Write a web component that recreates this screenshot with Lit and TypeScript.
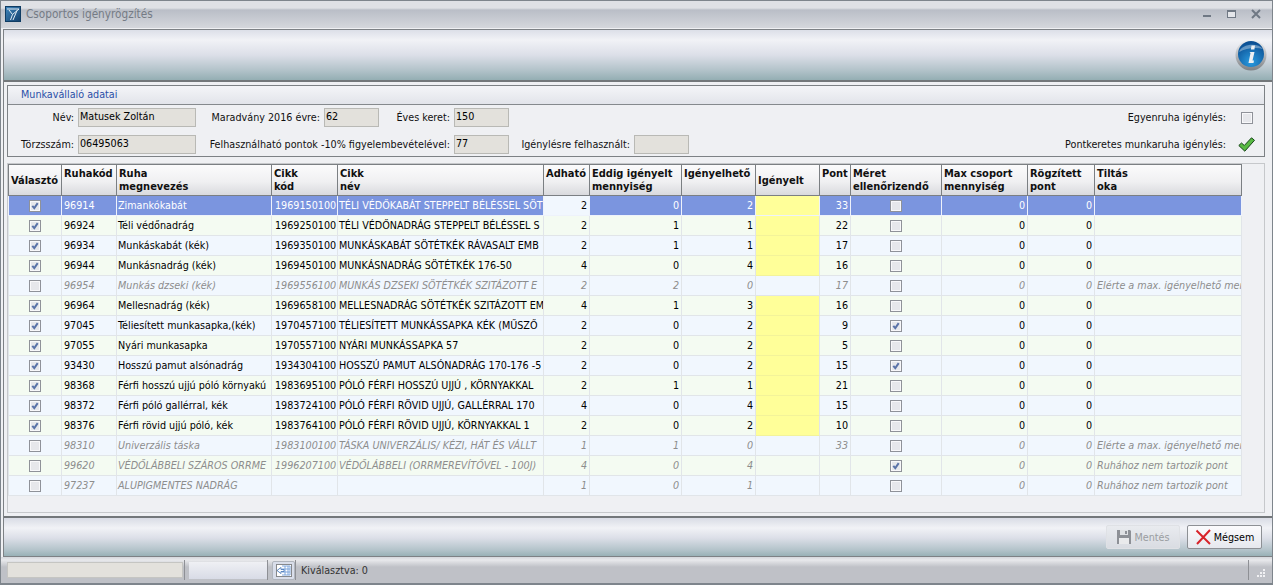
import { LitElement, html, css, svg } from 'lit';
import { customElement } from 'lit/decorators.js';
import { classMap } from 'lit/directives/class-map.js';

type Row = {
  pick: boolean;
  code: string;
  name: string;
  item: string;
  itemName: string;
  give: string;
  done: string;
  left: string;
  point: string;
  size?: boolean;
  off?: boolean;
  ask?: boolean;
  why?: string;
};

const MAXED = 'Elérte a max. igényelhető men';
const NOPOINT = 'Ruhához nem tartozik pont';

const rows: Row[] = [
  { pick: true, ask: true, code: '96914', name: 'Zimankókabát', item: '1969150100', itemName: 'TÉLI VÉDŐKABÁT STEPPELT BÉLÉSSEL SÖT', give: '2', done: '0', left: '2', point: '33' },
  { pick: true, ask: true, code: '96924', name: 'Téli védőnadrág', item: '1969250100', itemName: 'TÉLI VÉDŐNADRÁG STEPPELT BÉLÉSSEL S', give: '2', done: '1', left: '1', point: '22' },
  { pick: true, ask: true, code: '96934', name: 'Munkáskabát (kék)', item: '1969350100', itemName: 'MUNKÁSKABÁT SÖTÉTKÉK RÁVASALT EMB', give: '2', done: '1', left: '1', point: '17' },
  { pick: true, ask: true, code: '96944', name: 'Munkásnadrág (kék)', item: '1969450100', itemName: 'MUNKÁSNADRÁG SÖTÉTKÉK 176-50', give: '4', done: '0', left: '4', point: '16' },
  { pick: false, off: true, code: '96954', name: 'Munkás dzseki (kék)', item: '1969556100', itemName: 'MUNKÁS DZSEKI SÖTÉTKÉK SZITÁZOTT E', give: '2', done: '2', left: '0', point: '17', why: MAXED },
  { pick: true, ask: true, code: '96964', name: 'Mellesnadrág (kék)', item: '1969658100', itemName: 'MELLESNADRÁG SÖTÉTKÉK SZITÁZOTT EM', give: '4', done: '1', left: '3', point: '16' },
  { pick: true, ask: true, size: true, code: '97045', name: 'Téliesített munkasapka,(kék)', item: '1970457100', itemName: 'TÉLIESÍTETT MUNKÁSSAPKA KÉK (MŰSZŐ', give: '2', done: '0', left: '2', point: '9' },
  { pick: true, ask: true, code: '97055', name: 'Nyári munkasapka', item: '1970557100', itemName: 'NYÁRI MUNKÁSSAPKA 57', give: '2', done: '0', left: '2', point: '5' },
  { pick: true, ask: true, size: true, code: '93430', name: 'Hosszú pamut alsónadrág', item: '1934304100', itemName: 'HOSSZÚ PAMUT ALSÓNADRÁG 170-176 -5', give: '2', done: '0', left: '2', point: '15' },
  { pick: true, ask: true, code: '98368', name: 'Férfi hosszú ujjú póló környakú', item: '1983695100', itemName: 'PÓLÓ FÉRFI HOSSZÚ UJJÚ , KÖRNYAKKAL', give: '2', done: '1', left: '1', point: '21' },
  { pick: true, ask: true, code: '98372', name: 'Férfi póló gallérral, kék', item: '1983724100', itemName: 'PÓLÓ FÉRFI RÖVID UJJÚ, GALLÉRRAL 170', give: '4', done: '0', left: '4', point: '15' },
  { pick: true, ask: true, code: '98376', name: 'Férfi rövid ujjú póló, kék', item: '1983764100', itemName: 'PÓLÓ FÉRFI RÖVID UJJÚ, KÖRNYAKKAL 1', give: '2', done: '0', left: '2', point: '10' },
  { pick: false, off: true, code: '98310', name: 'Univerzális táska', item: '1983100100', itemName: 'TÁSKA UNIVERZÁLIS/ KÉZI, HÁT ÉS VÁLLT', give: '1', done: '1', left: '0', point: '33', why: MAXED },
  { pick: false, off: true, size: true, code: '99620', name: 'VÉDŐLÁBBELI SZÁROS ORRME', item: '1996207100', itemName: 'VÉDŐLÁBBELI (ORRMEREVÍTŐVEL - 100J)', give: '4', done: '0', left: '4', point: '', why: NOPOINT },
  { pick: false, off: true, code: '97237', name: 'ALUPIGMENTES NADRÁG', item: '', itemName: '', give: '1', done: '0', left: '1', point: '', why: NOPOINT },
];

const colWidths = [54, 55, 155, 66, 206, 46, 92, 74, 64, 31, 91, 86, 67, 147];

@customElement('app-root')
export class AppRoot extends LitElement {
  static styles = css`
    :host {
      display: block;
      width: 1273px;
      height: 585px;
      overflow: hidden;
      font-family: 'DejaVu Sans Condensed', 'DejaVu Sans', sans-serif;
      font-size: 10.7px;
      color: #111;
    }
    .win {
      height: 585px;
      box-sizing: border-box;
      display: flex;
      flex-direction: column;
      background: #eff0f3;
      border: 1px solid #7e858c;
      border-bottom: 2px solid #7e858c;
    }
    .title {
      flex: none;
      height: 27px;
      box-sizing: border-box;
      display: flex;
      align-items: center;
      padding: 0 4px 1px;
      gap: 5px;
      background: linear-gradient(#dfe1e5 0, #dfe1e5 7px, #babec7 9px, #c9ccd3 19px, #d5d7dc 27px);
      color: #757b85;
      font-size: 11.7px;
    }
    .title svg { display: block; }
    .wbtns { display: flex; gap: 11px; align-items: center; margin-right: 4px; }
    .body {
      flex: 1;
      min-height: 0;
      display: flex;
      flex-direction: column;
      margin: 1px 0 0 2px;
      border-left: 1px solid #7d8185;
    }
    .tool {
      flex: none;
      height: 53px;
      box-sizing: border-box;
      padding: 9px 5px 0 0;
      display: flex;
      justify-content: flex-end;
      border-top: 1px solid #7d8185;
      border-bottom: 2px solid #73777a;
      background: linear-gradient(#dcdfe8 0, #f1f2f6 10px, #dcdfe8 25px, #b3c3ca 40px, #94aeb3 50px);
    }
    .content {
      flex: 1;
      min-height: 0;
      padding: 3px 7px 3px 3px;
      display: flex;
      flex-direction: column;
      gap: 6px;
      background: #eff0f3;
    }
    .group {
      flex: none;
      height: 72px;
      box-sizing: border-box;
      border: 1px solid #7d8185;
    }
    .group-head {
      height: 18px;
      padding-left: 13px;
      line-height: 18px;
      color: #2a4fa8;
      border-bottom: 1px solid #85898d;
      background: linear-gradient(#f4f5f8, #e2e4ea);
    }
    .fields {
      padding: 3px 0 0 0;
      display: flex;
      flex-direction: column;
      gap: 8px;
    }
    .line {
      display: flex;
      align-items: center;
      height: 19px;
    }
    .lab {
      display: flex;
      justify-content: flex-end;
      padding-right: 4px;
      white-space: nowrap;
      flex: none;
      box-sizing: border-box;
    }
    .inp {
      flex: none;
      height: 19px;
      box-sizing: border-box;
      border: 1px solid #b9b9b5;
      background: #e3e1dc;
      padding: 1px;
      line-height: 14px;
      color: #000;
    }
    .ml14 { margin-left: 14px; }
    .l-first { width: 70px; }
    .l-rest { width: 114px; }
    .l-keret { width: 61px; }
    .l-long { width: 244px; }
    .l-used { width: 111px; }
    .i118 { width: 118px; }
    .i55 { width: 55px; }
    .grow { flex: 1; }
    .flag { display: flex; align-items: center; justify-content: flex-end; gap: 12px; }
    .flag svg { display: block; }
    .flag-icon { width: 23px; display: flex; justify-content: flex-start; margin-left: 3px; }
    .flag-icon.wide { margin-left: 0; width: 26px; }
    .table-wrap {
      flex: 1;
      min-height: 0;
      border: 1px solid #c6c8cb;
      overflow: hidden;
    }
    table {
      table-layout: fixed;
      border-collapse: separate;
      border-spacing: 0;
      width: 1234px;
    }
    th {
      height: 32px;
      box-sizing: border-box;
      padding: 2px 1px 0 2px;
      text-align: left;
      font-size: 11px;
      font-weight: 700;
      line-height: 13px;
      vertical-align: top;
      color: #101010;
      background: linear-gradient(#fbfbfc, #f0f0f2 55%, #d9dade);
      border: solid #7b7f83;
      border-width: 1px 1px 1px 0;
      overflow: hidden;
      white-space: nowrap;
    }
    th:first-child { border-left: 1px solid #7b7f83; }
    th.mid { vertical-align: middle; padding-top: 0; }
    td {
      height: 20px;
      box-sizing: border-box;
      padding: 0 2px;
      overflow: hidden;
      white-space: nowrap;
      border-right: 1px solid #e1e5e9;
      border-bottom: 1px solid #e1e5e9;
      color: #000;
    }
    td:first-child { border-left: 1px solid #e1e5e9; }
    td.tight { padding-left: 1px; }
    td.item { padding-left: 3px; padding-right: 0; }
    tr.even td { background: #f4fbf2; }
    tr.odd td { background: #f1f7fe; }
    tr.sel td { background: #7b95df; color: #fff; border-color: #eef2fb; }
    tr.sel td.give { background: #f1f7fe; color: #000; }
    tr.off td { color: #8d8d8d; font-style: italic; }
    td.num { text-align: right; }
    td.chk { padding: 0; }
    td.chk svg { display: block; margin: 0 auto; }
    td.want { background: #ffff99 !important; border-bottom-color: #f3f39a; }
    .foot {
      flex: none;
      height: 41px;
      box-sizing: border-box;
      border-top: 2px solid #73777a;
      border-bottom: 1px solid #7d8185;
      background: linear-gradient(#d9dce5 0, #f1f2f6 10px, #dcdfe8 20px, #b3c3ca 32px, #94aeb3 39px);
      display: flex;
      justify-content: flex-end;
      align-items: center;
      gap: 7px;
      padding: 0 10px 0 0;
    }
    .btn {
      width: 75px;
      height: 24px;
      box-sizing: border-box;
      display: flex;
      align-items: center;
      justify-content: center;
      gap: 2px;
      border: 1px solid #8d9095;
      border-radius: 2px;
      background: linear-gradient(#fbfbfd, #e6e8ee);
      color: #000;
    }
    .btn.dis {
      width: 74px;
      border-color: #dfe1e5;
      color: #9a9da1;
      background: linear-gradient(#e9ebef, #d9dce2);
    }
    .status {
      flex: none;
      height: 26px;
      box-sizing: border-box;
      margin-left: -3px;
      display: flex;
      align-items: center;
      background: linear-gradient(#d5d7dc 0, #e8e9ec 3px, #bfc1c7 10px, #bfc1c7 26px);
      padding-left: 6px;
      color: #333;
    }
    .s1 { width: 176px; height: 16px; box-sizing: border-box; background: #e3e1dc; border: 1px solid #c5c5c2; }
    .sep { width: 1px; height: 20px; background: #8e9095; flex: none; }
    .sep.first { margin-left: 1px; }
    .s2 { width: 78px; height: 17px; background: linear-gradient(#eff0f4, #d8dbe6); margin-left: 4px; }
    .s3 { width: 23px; height: 19px; box-sizing: border-box; display: flex; align-items: center; justify-content: center; margin-left: 4px; border: 1px solid #b0b5bd; border-radius: 2px; background: #d9deea; }
    .txt { margin-left: 5px; flex: 1; }
    .grip { width: 22px; height: 20px; border-left: 1px solid #8e9095; display: flex; align-items: flex-end; justify-content: flex-end; padding: 0 4px 2px 0; box-sizing: border-box; margin-right: 2px; }
  `;

  private box(checked: boolean) {
    return html`<svg width="12" height="12" viewBox="0 0 12 12">
      <rect x=".5" y=".5" width="11" height="11" fill="#e6e7eb" stroke="#8f9299"/>
      <rect x="1.5" y="1.5" width="9" height="9" fill="none" stroke="#f8f8fa"/>
      ${checked ? svg`<path d="M3.300 5.800l2 2.300 3.400-5" fill="none" stroke="#5a73a8" stroke-width="2"/>` : ''}
    </svg>`;
  }

  private row(r: Row, i: number) {
    const cls = { sel: i === 0, even: i % 2 === 1, odd: i % 2 === 0, off: !!r.off };
    return html`<tr class=${classMap(cls)}>
      <td class="chk">${this.box(r.pick)}</td>
      <td>${r.code}</td>
      <td class="tight">${r.name}</td>
      <td class="item">${r.item}</td>
      <td class="tight">${r.itemName}</td>
      <td class="num give">${r.give}</td>
      <td class="num">${r.done}</td>
      <td class="num">${r.left}</td>
      <td class=${r.ask ? 'want' : ''}></td>
      <td class="num">${r.point}</td>
      <td class="chk">${this.box(!!r.size)}</td>
      <td class="num">0</td>
      <td class="num">0</td>
      <td>${r.why ?? ''}</td>
    </tr>`;
  }

  render() {
    return html`<div class="win">
      <div class="title">
        <svg width="16" height="16" viewBox="0 0 16 16">
          <defs>
            <linearGradient id="tg" x1="0" y1="0" x2="1" y2="1"><stop offset="0" stop-color="#3f86bd"/><stop offset="1" stop-color="#123f6b"/></linearGradient>
          </defs>
          <rect x=".5" y=".5" width="15" height="15" fill="url(#tg)" stroke="#0f3c63"/>
          <path d="M2 3h12L7.500 8.500 5.500 14M4 4l3.500 4.500M12 4.500L8 14" fill="none" stroke="#e4edf4"/>
        </svg>
        <span>Csoportos igényrögzítés</span>
        <span class="grow"></span>
        <div class="wbtns">
          <svg width="14" height="10" viewBox="0 0 14 10"><rect x="3" y="6" width="8" height="2" fill="#6f7884"/></svg>
          <svg width="14" height="10" viewBox="0 0 14 10"><rect x="2.500" y="1.500" width="8" height="7" fill="#e4e6ea" stroke="#6f7884"/><rect x="2" y="1" width="9" height="2" fill="#6f7884"/></svg>
          <svg width="14" height="10" viewBox="0 0 14 10"><path d="M2 1l8 8M10 1L2 9" stroke="#6f7884" stroke-width="2"/></svg>
        </div>
      </div>
      <div class="body">
        <div class="tool">
          <svg width="32" height="32" viewBox="0 0 32 32">
            <defs>
              <radialGradient id="ig" cx=".5" cy=".8" r=".75"><stop offset="0" stop-color="#2a9be0"/><stop offset="1" stop-color="#0b4f93"/></radialGradient>
              <linearGradient id="ir" x1="0" y1="0" x2="0" y2="1"><stop offset="0" stop-color="#f2f3f5"/><stop offset="1" stop-color="#7d8084"/></linearGradient>
            </defs>
            <circle cx="16" cy="16" r="15.500" fill="url(#ir)"/>
            <circle cx="16" cy="15" r="13" fill="url(#ig)"/>
            <path d="M4 13c2-8 19-10 24-3-7-2-17-1-24 3z" fill="#fff" opacity=".35"/>
            <path d="M15.500 13h4l-2 8.500h1.500l-.5 2.500h-5l2-10h-1zM16.500 6.500h3.500l-.6 4h-3.500z" fill="#eef0f2"/>
          </svg>
        </div>
        <div class="content">
          <div class="group">
            <div class="group-head">Munkavállaló adatai</div>
            <div class="fields">
              <div class="line">
                <span class="lab l-first">Név:</span><span class="inp i118">Matusek Zoltán</span>
                <span class="lab l-rest ml14">Maradvány 2016 évre:</span><span class="inp i55">62</span>
                <span class="lab l-keret ml14">Éves keret:</span><span class="inp i55">150</span>
                <span class="grow"></span>
                <div class="flag">
                  <span>Egyenruha igénylés:</span>
                  <span class="flag-icon">${this.box(false)}</span>
                </div>
              </div>
              <div class="line">
                <span class="lab l-first">Törzsszám:</span><span class="inp i118">06495063</span>
                <span class="lab l-long ml14">Felhasználható pontok -10% figyelembevételével:</span><span class="inp i55">77</span>
                <span class="lab l-used ml14">Igénylésre felhasznált:</span><span class="inp i55"></span>
                <span class="grow"></span>
                <div class="flag">
                  <span>Pontkeretes munkaruha igénylés:</span>
                  <span class="flag-icon wide">
                    <svg width="17" height="15" viewBox="0 0 17 15"><path d="M.8 8.500L3.500 6l2.800 2.500L13.500.8l3 2.500L6.800 14.200z" fill="#58b943" stroke="#17451a"/></svg>
                  </span>
                </div>
              </div>
            </div>
          </div>
          <div class="table-wrap">
            <table>
              <colgroup>${colWidths.map((w) => html`<col style="width:${w}px" />`)}</colgroup>
              <thead>
                <tr>
                  <th class="mid">Választó</th>
                  <th>Ruhakód</th>
                  <th>Ruha<br />megnevezés</th>
                  <th>Cikk<br />kód</th>
                  <th>Cikk<br />név</th>
                  <th>Adható</th>
                  <th>Eddig igényelt<br />mennyiség</th>
                  <th>Igényelhető</th>
                  <th class="mid">Igényelt</th>
                  <th>Pont</th>
                  <th>Méret<br />ellenőrizendő</th>
                  <th>Max csoport<br />mennyiség</th>
                  <th>Rögzített<br />pont</th>
                  <th>Tiltás<br />oka</th>
                </tr>
              </thead>
              <tbody>${rows.map((r, i) => this.row(r, i))}</tbody>
            </table>
          </div>
        </div>
        <div class="foot">
          <div class="btn dis">
            <svg width="16" height="16" viewBox="0 0 16 16"><path d="M1 1h13l1 1v13H1z" fill="#8d9096"/><rect x="4" y="1" width="8" height="5" fill="#dfe1e4"/><rect x="9" y="2" width="2" height="3" fill="#8d9096"/><rect x="3" y="9" width="10" height="6" fill="#e9eaec"/></svg>
            <span>Mentés</span>
          </div>
          <div class="btn">
            <svg width="17" height="16" viewBox="0 0 17 16"><path d="M1.500 1.500L15 15M15 1L2 15" stroke="#d8232a" stroke-width="2"/></svg>
            <span>Mégsem</span>
          </div>
        </div>
        <div class="status">
          <div class="s1"></div>
          <div class="sep first"></div>
          <div class="s2"></div>
          <div class="sep"></div>
          <div class="s3">
            <svg width="18" height="15" viewBox="0 0 18 15">
              <rect x="1.500" y="1.500" width="15" height="12" fill="#fff" stroke="#222" stroke-dasharray="1 1"/>
              <path d="M7 3h8v9H7M7 6h8M7 9h8M10 3v9M13 3v9" fill="none" stroke="#7fa6dc"/>
              <path d="M2 7.500l4-3v2h3v2H6v2z" fill="#fff" stroke="#3a6fb5" stroke-width=".8"/>
            </svg>
          </div>
          <div class="sep"></div>
          <span class="txt">Kiválasztva: 0</span>
          <div class="grip">
            <svg width="10" height="10" viewBox="0 0 10 10" fill="#f1f1f3"><rect x="7" y="1" width="2" height="2"/><rect x="4" y="4" width="2" height="2"/><rect x="7" y="4" width="2" height="2"/><rect x="1" y="7" width="2" height="2"/><rect x="4" y="7" width="2" height="2"/><rect x="7" y="7" width="2" height="2"/></svg>
          </div>
        </div>
      </div>
    </div>`;
  }
}
